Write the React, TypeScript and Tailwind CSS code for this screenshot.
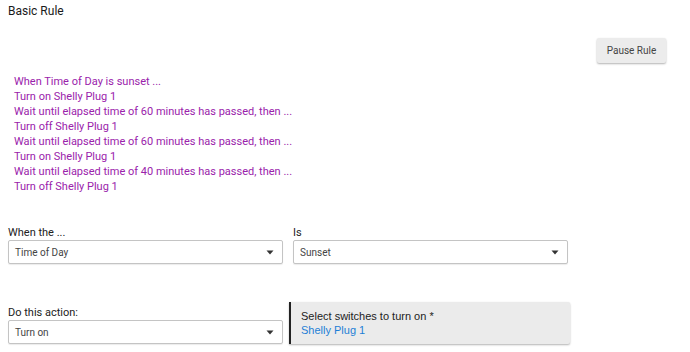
import React from 'react';

const steps = [
  'When Time of Day is sunset ...',
  'Turn on Shelly Plug 1',
  'Wait until elapsed time of 60 minutes has passed, then ...',
  'Turn off Shelly Plug 1',
  'Wait until elapsed time of 60 minutes has passed, then ...',
  'Turn on Shelly Plug 1',
  'Wait until elapsed time of 40 minutes has passed, then ...',
  'Turn off Shelly Plug 1',
];

const Caret = () => (
  <svg width="8" height="5" viewBox="0 0 8 5" className="shrink-0">
    <path d="M0.5 0.5 L7.5 0.5 L4 4.5 Z" fill="#333" />
  </svg>
);

const SelectBox: React.FC<{ value: string }> = ({ value }) => (
  <div className="flex items-center justify-between w-[275px] h-[24px] pl-[6px] pr-[8px] bg-white border border-[#c4c4c4] rounded-[2px] shadow-[0_1px_1px_rgba(0,0,0,0.08)]">
    <span className="text-[10px] text-[#444]">{value}</span>
    <Caret />
  </div>
);

const Field: React.FC<{ label: string; value: string }> = ({ label, value }) => (
  <div className="flex flex-col">
    <label className="text-[11px] leading-[14px] text-[#222]">{label}</label>
    <SelectBox value={value} />
  </div>
);

const App: React.FC = () => {
  return (
    <div className="w-[690px] h-[352px] bg-white overflow-hidden font-['Roboto',sans-serif]">
      <h1 className="pl-2 pt-[3px] text-[12px] leading-[16px] text-[#1a1a1a] font-normal">Basic Rule</h1>

      <div className="flex justify-end pr-[24px] mt-[19px]">
        <button className="w-[69px] h-[25px] text-[10px] text-[#444] bg-[#ececec] rounded-[2px] shadow-[0_1px_2px_rgba(0,0,0,0.3)]">
          Pause Rule
        </button>
      </div>

      <ul className="pl-[14px] mt-[11px]">
        {steps.map((s, i) => (
          <li key={i} className="text-[11px] leading-[15px] text-[#9a22ab]">{s}</li>
        ))}
      </ul>

      <div className="flex gap-[10px] pl-2 mt-[32px]">
        <Field label="When the ..." value="Time of Day" />
        <Field label="Is" value="Sunset" />
      </div>

      <div className="flex items-end pl-2 mt-[38px]">
        <Field label="Do this action:" value="Turn on" />
        <div className="ml-[6px] w-[281px] h-[42px] pl-[10px] pt-[7px] bg-[#ebebeb] border-l-2 border-[#222] rounded-r-[2px] shadow-[0_1px_2px_rgba(0,0,0,0.3)] font-['Liberation_Sans',sans-serif] text-[11px] leading-[14px]">
          <div className="text-[#222]">Select switches to turn on *</div>
          <div className="text-[#1e7fd6]">Shelly Plug 1</div>
        </div>
      </div>
    </div>
  );
};

export default App;
